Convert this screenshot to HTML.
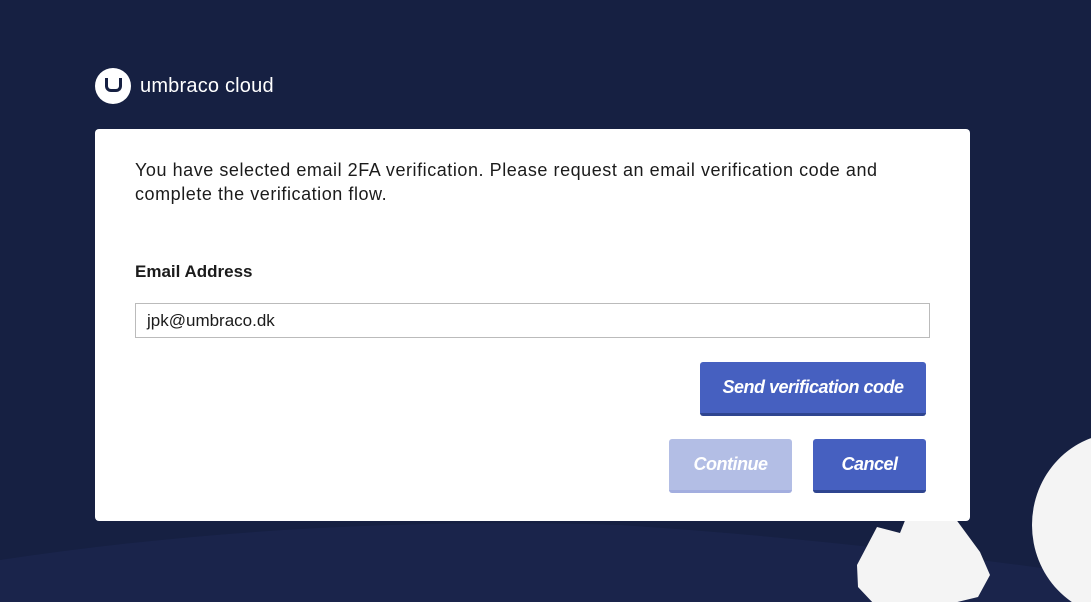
<!DOCTYPE html>
<html><head><style>
body{margin:0;width:1091px;height:602px;overflow:hidden;background:#162042;font-family:"Liberation Sans",sans-serif;position:relative}
svg.bg{position:absolute;left:0;top:0}
.logo{position:absolute;left:95px;top:68px;display:flex;align-items:center;color:#fff}
.logo .c{width:36px;height:36px;border-radius:50%;background:#fff;position:relative}
.logo .c:after{content:"";position:absolute;left:10px;top:10px;width:11px;height:11px;border:3px solid #162042;border-top:none;border-radius:0 0 6px 6px}
.logo span{font-size:20px;margin-left:9px;letter-spacing:0.2px}
.card{position:absolute;left:95px;top:129px;width:875px;height:392px;background:#fff;border-radius:4px}
.p{position:absolute;left:40px;top:29px;width:770px;font-size:18px;line-height:24px;color:#1b1b1b;letter-spacing:0.55px}
.lbl{position:absolute;left:40px;top:133px;font-size:17px;font-weight:bold;color:#1b1b1b}
.inp{position:absolute;left:40px;top:174px;height:33px;border:1px solid #bbb;font-size:17px;line-height:33px;padding-left:11px;color:#1b1b1b;width:782px}
.btn{position:absolute;height:54px;border-radius:3px;color:#fff;font-weight:bold;font-style:italic;font-size:18px;text-align:center;line-height:50px;box-sizing:border-box;letter-spacing:-0.5px}
</style></head><body>
<svg class="bg" width="1091" height="602">
<path d="M0 560 Q300 515 620 525 Q850 540 1091 575 L1091 602 L0 602Z" fill="#1a244b"/>
<ellipse cx="1120" cy="525" rx="88" ry="92" fill="#f4f4f4"/>
<path d="M877 527 L900 533 L906 518 L955 518 L980 552 L990 575 L978 597 L945 605 L875 605 L858 587 L857 565 Z" fill="#f4f4f4"/>
</svg>
<div class="logo"><div class="c"></div><span>umbraco cloud</span></div>
<div class="card">
<div class="p">You have selected email 2FA verification. Please request an email verification code and complete the verification flow.</div>
<div class="lbl">Email Address</div>
<div class="inp">jpk@umbraco.dk</div>
<div class="btn" style="left:605px;top:233px;width:226px;background:#4660c0;border-bottom:3px solid #2f4590">Send verification code</div>
<div class="btn" style="left:574px;top:310px;width:123px;background:#b3bee5;border-bottom:3px solid #a3aedf">Continue</div>
<div class="btn" style="left:718px;top:310px;width:113px;background:#4660c0;border-bottom:3px solid #2f4590">Cancel</div>
</div>
</body></html>
